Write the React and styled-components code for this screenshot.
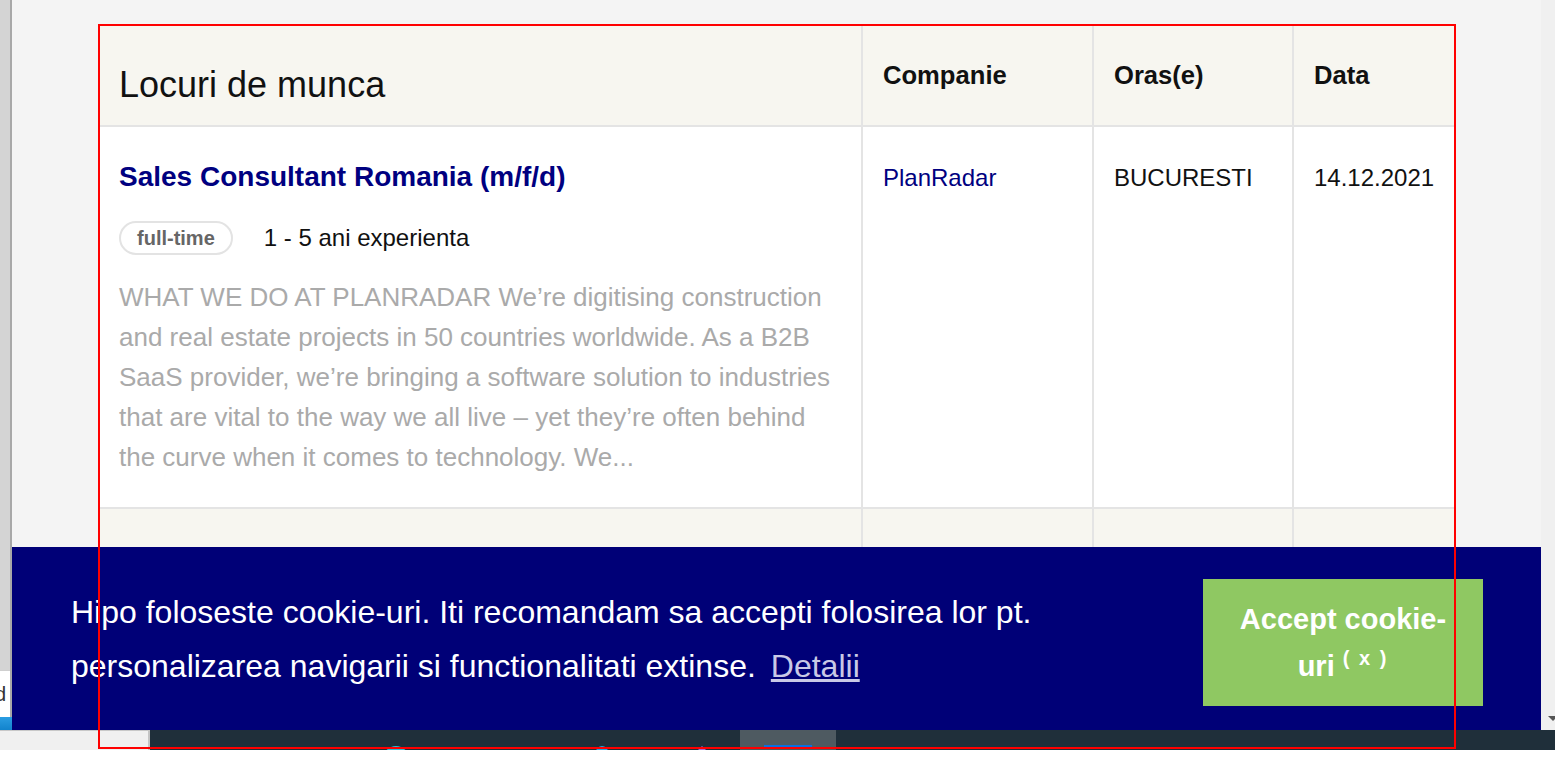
import React from "react";
import styled, { createGlobalStyle } from "styled-components";

const GlobalStyle = createGlobalStyle`
  html, body {
    margin: 0;
    padding: 0;
    background: #ffffff;
    overflow: hidden;
  }
  body {
    font-family: "Liberation Sans", Arial, sans-serif;
  }
  * {
    box-sizing: border-box;
  }
`;

const jobs = [
  {
    title: "Sales Consultant Romania (m/f/d)",
    type: "full-time",
    experience: "1 - 5 ani experienta",
    description:
      "WHAT WE DO AT PLANRADAR We\u2019re digitising construction and real estate projects in 50 countries worldwide. As a B2B SaaS provider, we\u2019re bringing a software solution to industries that are vital to the way we all live \u2013 yet they\u2019re often behind the curve when it comes to technology. We...",
    company: "PlanRadar",
    city: "BUCURESTI",
    date: "14.12.2021",
  },
];

const App = () => {
  return (
    <Desktop>
      <GlobalStyle />
      <Screen>
        <SideWindow>
          <SidePanel>
            <SideField>d</SideField>
          </SidePanel>
          <SideBar />
        </SideWindow>

        <Viewport>
          <Table>
            <TitleHead>Locuri de munca</TitleHead>
            <HeadCell>Companie</HeadCell>
            <HeadCell>Oras(e)</HeadCell>
            <HeadCell>Data</HeadCell>

            {jobs.map((job) => (
              <React.Fragment key={job.title}>
                <Cell>
                  <JobTitle href="#">{job.title}</JobTitle>
                  <Meta>
                    <Pill>{job.type}</Pill>
                    <Experience>{job.experience}</Experience>
                  </Meta>
                  <Description>{job.description}</Description>
                </Cell>
                <InfoCell>
                  <CompanyLink href="#">{job.company}</CompanyLink>
                </InfoCell>
                <InfoCell>{job.city}</InfoCell>
                <InfoCell>{job.date}</InfoCell>
              </React.Fragment>
            ))}

            <Cell $shaded $tall />
            <Cell $shaded $tall />
            <Cell $shaded $tall />
            <Cell $shaded $tall />
          </Table>

          <CookieBanner>
            <CookieText>
              Hipo foloseste cookie-uri. Iti recomandam sa accepti folosirea lor pt.
              personalizarea navigarii si functionalitati extinse.
              <DetailsLink href="#">Detalii</DetailsLink>
            </CookieText>
            <AcceptButton>
              Accept cookie-uri <Sup>( x )</Sup>
            </AcceptButton>
          </CookieBanner>
        </Viewport>

        <Scrollbar>
          <ScrollArrow />
        </Scrollbar>
      </Screen>

      <Taskbar>
        <TaskStart />
        <TaskDark>
          <TaskIcon $offset={233} width="26" height="20" viewBox="0 0 26 20">
            <circle cx="13" cy="29" r="13" fill="#2bbfd8" />
          </TaskIcon>
          <TaskIcon $offset={187} width="12" height="20" viewBox="0 0 12 20">
            <circle cx="6" cy="22" r="6" fill="#23a6e2" />
          </TaskIcon>
          <TaskIcon $offset={88} width="12" height="20" viewBox="0 0 12 20">
            <path d="M6 16 L12 22 L0 22 Z" fill="#a56bd8" />
          </TaskIcon>
          <ActiveTask>
            <ActiveMark />
          </ActiveTask>
        </TaskDark>
      </Taskbar>

      <Highlight />
    </Desktop>
  );
};

const Desktop = styled.div`
  position: relative;
  width: 1555px;
  height: 775px;
  display: flex;
  flex-direction: column;
  background: #ffffff;
  overflow: hidden;
`;

const Screen = styled.div`
  display: flex;
  height: 730px;
`;

const SideWindow = styled.div`
  width: 12px;
  display: flex;
  flex-direction: column;
`;

const SidePanel = styled.div`
  flex: 1;
  display: flex;
  flex-direction: column;
  justify-content: flex-end;
  background: #d4d4d4;
  border-right: 2px solid #a8a8a8;
`;

const SideField = styled.div`
  height: 47px;
  display: flex;
  align-items: center;
  justify-content: flex-end;
  padding-right: 4px;
  overflow: hidden;
  background: #ffffff;
  border-top: 1px solid #cfcfcf;
  color: #333333;
  font-size: 20px;
`;

const SideBar = styled.div`
  height: 13px;
  background: linear-gradient(#2b9de2, #1283cc);
`;

const Viewport = styled.div`
  position: relative;
  flex: 1;
  overflow: hidden;
  background: #f4f4f4;
  padding: 26px 0 0 87px;
`;

const Table = styled.div`
  width: 1356px;
  display: grid;
  grid-template-columns: 762px 229px 198px 161px;
  gap: 2px;
  background: #e4e4e4;
`;

const HeadCell = styled.div`
  height: 99px;
  display: flex;
  align-items: center;
  padding: 0 20px;
  background: #f7f6f0;
  color: #111111;
  font-size: 25.6px;
  font-weight: bold;
`;

const TitleHead = styled(HeadCell)`
  padding-top: 18px;
  font-size: 36px;
  font-weight: normal;
`;

const Cell = styled.div`
  height: ${(p) => (p.$tall ? "240px" : "auto")};
  padding: 34px 20px 30px;
  background: ${(p) => (p.$shaded ? "#f7f6f0" : "#ffffff")};
  color: #111111;
  font-size: 24px;
  line-height: 1.15;
`;

const InfoCell = styled(Cell)`
  padding-top: 37px;
`;

const JobTitle = styled.a`
  display: block;
  color: #000080;
  font-size: 28px;
  font-weight: bold;
  line-height: 1.15;
  text-decoration: none;
`;

const Meta = styled.div`
  display: flex;
  align-items: center;
  gap: 31px;
  margin-top: 28px;
`;

const Pill = styled.span`
  padding: 3.5px 16px;
  border: 2px solid #e3e3e3;
  border-radius: 18px;
  color: #666666;
  font-size: 20px;
  font-weight: bold;
  line-height: 1.15;
`;

const Experience = styled.span`
  color: #111111;
  font-size: 24px;
`;

const Description = styled.p`
  margin: 22px 0 0;
  color: #aaaaaa;
  font-size: 26px;
  line-height: 40px;
`;

const CompanyLink = styled.a`
  color: #000080;
  text-decoration: none;
`;

const CookieBanner = styled.div`
  position: absolute;
  left: 0;
  right: 0;
  bottom: 0;
  height: 183px;
  display: flex;
  align-items: center;
  padding: 0 58px 0 59px;
  background: #000077;
`;

const CookieText = styled.p`
  flex: 1;
  margin: 0;
  padding-right: 60px;
  color: #ffffff;
  font-size: 32px;
  line-height: 54px;
`;

const DetailsLink = styled.a`
  margin-left: 15px;
  color: #c9c9e6;
  text-decoration: underline;
`;

const AcceptButton = styled.button`
  flex-shrink: 0;
  width: 280px;
  height: 127px;
  margin-top: 8px;
  padding: 0 30px;
  border: none;
  background: #8fc862;
  color: #ffffff;
  font-family: "Liberation Sans", Arial, sans-serif;
  font-size: 29px;
  font-weight: bold;
  line-height: 47px;
  text-align: center;
`;

const Sup = styled.span`
  font-size: 20px;
  line-height: 1;
  letter-spacing: 2px;
  vertical-align: 11px;
`;

const Scrollbar = styled.div`
  width: 14px;
  display: flex;
  flex-direction: column;
  justify-content: flex-end;
  overflow: hidden;
  background: #f0f0f0;
`;

const ScrollArrow = styled.div`
  width: 0;
  height: 0;
  margin: 0 0 9px 7px;
  border-left: 5px solid transparent;
  border-right: 5px solid transparent;
  border-top: 5px solid #555555;
`;

const Taskbar = styled.div`
  display: flex;
  height: 20px;
`;

const TaskStart = styled.div`
  width: 150px;
  background: #f0f0f0;
  border-top: 1px solid #c8c8c8;
  border-right: 2px solid #c4c4c4;
`;

const TaskDark = styled.div`
  flex: 1;
  display: flex;
  background: #1f2f3a;
  overflow: hidden;
`;

const TaskIcon = styled.svg`
  flex-shrink: 0;
  margin-left: ${(p) => p.$offset}px;
`;

const ActiveTask = styled.div`
  width: 96px;
  margin-left: 32px;
  display: flex;
  flex-direction: column;
  justify-content: flex-end;
  align-items: center;
  padding-bottom: 2px;
  background: #4e5a61;
`;

const ActiveMark = styled.div`
  width: 48px;
  height: 3px;
  background: #0b6fe0;
`;

const Highlight = styled.div`
  position: absolute;
  left: 98px;
  top: 24px;
  width: 1358px;
  height: 725px;
  border: 2px solid #ff0000;
  pointer-events: none;
`;

export default App;
